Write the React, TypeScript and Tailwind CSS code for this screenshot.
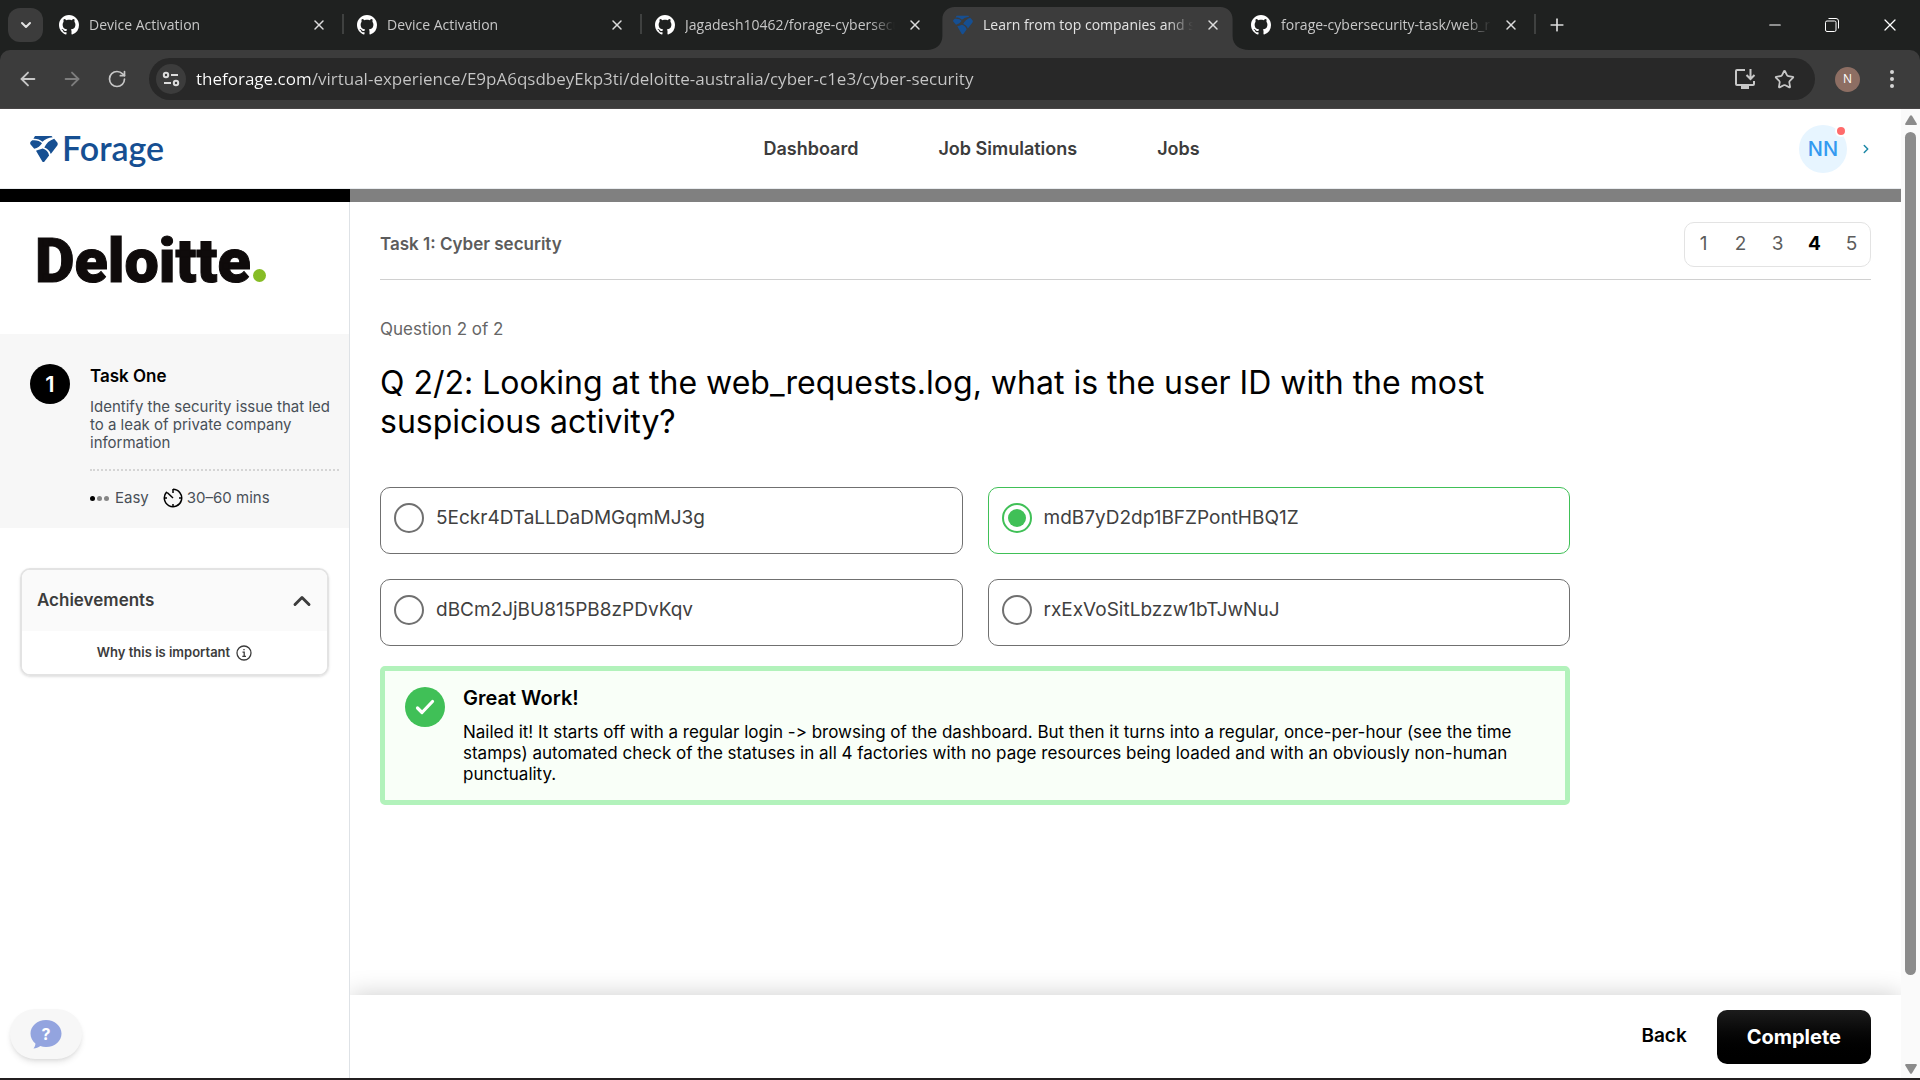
import type { ReactNode } from "react";
import {
  ArrowLeft,
  ArrowRight,
  ChevronDown,
  ChevronRight,
  ChevronUp,
  Minus,
  Plus,
  RotateCw,
  Star,
  X,
} from "lucide-react";

function GithubMark() {
  return (
    <svg viewBox="0 0 16 16" className="size-5 shrink-0 fill-white" aria-hidden="true">
      <path d="M8 0C3.58 0 0 3.58 0 8c0 3.54 2.29 6.53 5.47 7.59.4.07.55-.17.55-.38 0-.19-.01-.82-.01-1.49-2.01.37-2.53-.49-2.69-.94-.09-.23-.48-.94-.82-1.13-.28-.15-.68-.52-.01-.53.63-.01 1.08.58 1.23.82.72 1.21 1.87.87 2.33.66.07-.52.28-.87.51-1.07-1.78-.2-3.64-.89-3.64-3.95 0-.87.31-1.59.82-2.15-.08-.2-.36-1.02.08-2.12 0 0 .67-.21 2.2.82.64-.18 1.32-.27 2-.27.68 0 1.36.09 2 .27 1.53-1.04 2.2-.82 2.2-.82.44 1.1.16 1.92.08 2.12.51.56.82 1.27.82 2.15 0 3.07-1.87 3.75-3.65 3.95.29.25.54.73.54 1.48 0 1.07-.01 1.93-.01 2.2 0 .21.15.46.55.38A8.01 8.01 0 0 0 16 8c0-4.42-3.58-8-8-8z" />
    </svg>
  );
}

function ForageMark({ className }: { className: string }) {
  return (
    <svg viewBox="0 0 28 28" className={className} aria-hidden="true">
      <path d="M5 1h16.500l1.200 1.300c-4.500.6-7.500 2-10.200 4.400C10 4.300 7 3.500 3.400 3.700z" />
      <path d="M2.300 5.300c4-.5 7.600.5 9.700 2.900-1.500 2.600-4.200 4.600-7.800 5.500L.6 9.400C-.1 8.400.1 7.400.8 6.600z" />
      <path d="M24.200 3.700l3.100 3.800c.6.9.6 2 0 2.900l-6.500 8.500c-1-2.800-3.400-5.100-6.500-6.300 1.800-4.300 5.300-7.500 9.900-8.900z" />
      <path d="M6 15.800c2.700-.8 4.900-1.700 6.700-2.200 3.400 1 5.800 3.500 6.400 6.800l-4.600 6.100c-.6.8-1.600.8-2.200 0z" />
    </svg>
  );
}

type Tab = { title: string; icon: "github" | "forage"; active?: boolean; divider?: boolean };

const tabs: Tab[] = [
  { title: "Device Activation", icon: "github", divider: true },
  { title: "Device Activation", icon: "github", divider: true },
  { title: "Jagadesh10462/forage-cybersecurity-task", icon: "github" },
  { title: "Learn from top companies and start your career", icon: "forage", active: true },
  { title: "forage-cybersecurity-task/web_requests.log", icon: "github", divider: true },
];

function BrowserTab({ title, icon, active, divider }: Tab) {
  return (
    <li className="relative flex w-[298px] items-end">
      {active && (
        <svg
          viewBox="0 0 314 43"
          preserveAspectRatio="none"
          className="absolute bottom-0 -left-3 h-[43px] w-[322px] fill-[#3c3c3c]"
          aria-hidden="true"
        >
          <path d="M0 43c8 0 15-5 15-14V12C15 5 20 0 27 0h259c7 0 12 5 12 12v17c0 9 7 14 16 14z" />
        </svg>
      )}
      <div className="relative flex h-[50px] w-full items-center px-3.5 py-2">
        {icon === "github" ? <GithubMark /> : <ForageMark className="h-6 w-5 shrink-0 fill-[#164f92]" />}
        <span
          className={
            (active ? "text-[#e3e3e3]" : "text-[#c7c7c7]") +
            " ml-2.5 min-w-0 flex-1 overflow-hidden text-sm whitespace-nowrap [mask-image:linear-gradient(to_right,black_88%,transparent)]"
          }
        >
          {title}
        </span>
        <button type="button" aria-label="Close tab" className="ml-2.5 grid size-5 place-items-center text-[#dcdcdc]">
          <X className="size-4" strokeWidth={2.2} />
        </button>
      </div>
      {divider && <span className="absolute top-[14px] -right-px h-5 w-0.5 bg-[#3f4140]" />}
    </li>
  );
}

function BrowserChrome() {
  return (
    <header className="shrink-0 bg-[#1f2120] font-['Open_Sans',sans-serif]">
      <div className="flex h-[50px] items-center">
        <button
          type="button"
          aria-label="Search tabs"
          className="ml-2 grid h-[34px] w-[35px] shrink-0 place-items-center rounded-xl bg-[#3c3c3c] text-[#e3e3e3]"
        >
          <ChevronDown className="size-4" strokeWidth={3} />
        </button>
        <ul className="ml-0.5 flex">
          {tabs.map((tab, i) => (
            <BrowserTab key={i} {...tab} />
          ))}
        </ul>
        <button type="button" aria-label="New tab" className="ml-2.5 grid size-6 place-items-center text-[#dcdcdc]">
          <Plus className="size-5" strokeWidth={2} />
        </button>
        <div className="mr-5 ml-auto flex items-center gap-10 text-white">
          <button type="button" aria-label="Minimize">
            <Minus className="size-[18px]" strokeWidth={1.5} />
          </button>
          <button type="button" aria-label="Restore">
            <svg viewBox="0 0 16 16" className="size-4 fill-none stroke-white" aria-hidden="true">
              <rect x="1.500" y="4" width="10.500" height="10.500" rx="1.500" />
              <path d="M4.500 1.500H12A2.500 2.500 0 0 1 14.500 4v7.500" />
            </svg>
          </button>
          <button type="button" aria-label="Close">
            <X className="size-5" strokeWidth={1.5} />
          </button>
        </div>
      </div>

      <div className="flex h-[59px] items-center rounded-t-[10px] border-b border-[#484546] bg-[#3c3c3c] text-[#c7c7c7]">
        <button type="button" aria-label="Back" className="ml-[17px]">
          <ArrowLeft className="size-[22px]" />
        </button>
        <button type="button" aria-label="Forward" className="ml-[22px] text-[#7d7d7d]">
          <ArrowRight className="size-[22px]" />
        </button>
        <button type="button" aria-label="Reload" className="ml-6">
          <RotateCw className="size-5" />
        </button>
        <div className="ml-[22px] flex h-[42px] min-w-0 flex-1 items-center rounded-full bg-[#282828] pl-[7px]">
          <button
            type="button"
            aria-label="View site information"
            className="grid size-[30px] shrink-0 place-items-center rounded-full bg-[#3c3c3c]"
          >
            <svg viewBox="0 0 18 18" className="size-[18px] fill-none stroke-[#dcdcdc] stroke-2" aria-hidden="true">
              <circle cx="4" cy="5" r="2.200" />
              <path d="M9 5h7M2 13h7" />
              <circle cx="14" cy="13" r="2.200" />
            </svg>
          </button>
          <input
            type="text"
            aria-label="Address"
            defaultValue="theforage.com/virtual-experience/E9pA6qsdbeyEkp3ti/deloitte-australia/cyber-c1e3/cyber-security"
            className="ml-2.5 min-w-0 flex-1 bg-[linear-gradient(to_right,#ffffff_115px,#c7c7c7_115px)] bg-clip-text text-[17px] text-transparent outline-none"
          />
          <button type="button" aria-label="Install app">
            <svg viewBox="0 0 22 22" className="size-[22px] fill-none stroke-[#c7c7c7] stroke-2" aria-hidden="true">
              <path d="M11 2H3a1 1 0 0 0-1 1v13a1 1 0 0 0 1 1h16a1 1 0 0 0 1-1v-3" />
              <path d="M16.500 1v9.500M12.500 7l4 4 4-4" />
              <path d="M7 19.500h8" strokeWidth="3" />
            </svg>
          </button>
          <button type="button" aria-label="Bookmark this page" className="mr-5 ml-[18px]">
            <Star className="size-[21px]" strokeWidth={2} />
          </button>
        </div>
        <button
          type="button"
          aria-label="Profile"
          className="ml-5 grid size-[25px] place-items-center rounded-full bg-[#8d6e63] text-xs text-white"
        >
          N
        </button>
        <button type="button" aria-label="Menu" className="mr-[26px] ml-[30px] flex flex-col gap-[3px]">
          <span className="size-1 rounded-full bg-[#d5d5d5]" />
          <span className="size-1 rounded-full bg-[#d5d5d5]" />
          <span className="size-1 rounded-full bg-[#d5d5d5]" />
        </button>
      </div>
    </header>
  );
}

function SiteHeader() {
  return (
    <header className="flex h-20 shrink-0 items-center justify-between border-b border-[#e9ecef] bg-white pr-7 pl-[30px]">
      <a href="#home" className="flex items-start text-[#164f92]" aria-label="Forage home">
        <ForageMark className="size-7 fill-[#164f92]" />
        <span className="ml-1 font-['Lato',sans-serif] text-[34px] leading-[26px] font-semibold">Forage</span>
      </a>
      <nav className="flex gap-20 text-lg font-semibold text-[#3c3c3c]">
        <a href="#dashboard">Dashboard</a>
        <a href="#simulations">Job Simulations</a>
        <a href="#jobs">Jobs</a>
      </nav>
      <button type="button" aria-label="Account menu" className="flex items-center gap-3">
        <span className="relative grid size-12 place-items-center rounded-full bg-[#e7f5ff] text-xl font-medium text-[#339af0]">
          NN
          <span className="absolute top-0 right-0 size-3 rounded-full border-2 border-white bg-[#ff6b6b]" />
        </span>
        <ChevronRight className="size-3.5 text-[#1b87a6]" strokeWidth={2.5} />
      </button>
    </header>
  );
}

function Sidebar() {
  return (
    <aside className="flex w-[350px] shrink-0 flex-col border-r border-[#dee2e6] bg-white">
      <div className="flex h-[132px] items-start pt-7 pl-[35px]">
        <span className="font-['Roboto',sans-serif] text-[61px] leading-[62px] font-black text-[#0f0b0b] [-webkit-text-stroke:1px_#0f0b0b]">
          Deloitte
        </span>
        <span className="mt-[39px] ml-0.5 size-[13px] rounded-full bg-[#86bc25]" />
      </div>
      <section className="flex gap-5 bg-[#f7f7f7] pt-[30px] pr-2.5 pb-[18px] pl-[30px]">
        <span className="grid size-10 shrink-0 place-items-center rounded-full bg-black text-[22px] font-semibold text-white">
          1
        </span>
        <div className="min-w-0 flex-1">
          <h2 className="text-[17px] leading-6 font-semibold text-black">Task One</h2>
          <p className="mt-2.5 border-b-2 border-dotted border-[#d5d5d5] pb-[17px] text-[15px] leading-[18px] text-[#495057]">
            Identify the security issue that led to a leak of private company information
          </p>
          <div className="mt-[15px] flex items-center text-[15px] leading-6 text-[#495057]">
            <span className="flex gap-0.5">
              <span className="size-[5px] rounded-full bg-black" />
              <span className="size-[5px] rounded-full bg-[#868686]" />
              <span className="size-[5px] rounded-full bg-[#868686]" />
            </span>
            <span className="ml-1.5">Easy</span>
            <svg viewBox="0 0 20 20" className="mr-1 ml-3.5 size-5 fill-none stroke-black stroke-[1.5]" aria-hidden="true">
              <path d="M10 1.300a8.700 8.700 0 1 1-6.200 2.600" />
              <path d="M10 1v4M16 10h2.500M10 16v2.500M1.500 10H4M10 10L4.200 4.500" />
            </svg>
            <span>30–60 mins</span>
          </div>
        </div>
      </section>
      <section className="mx-5 mt-10 overflow-hidden rounded-[10px] border-2 border-[#e3e3e3] shadow-sm">
        <button
          type="button"
          aria-expanded="true"
          className="flex h-[61px] w-full items-center justify-between bg-[#fafafa] pr-[11px] pl-[15px] text-[17px] font-semibold text-[#3c3c3c]"
        >
          Achievements
          <ChevronUp className="size-7" strokeWidth={2.5} />
        </button>
        <a
          href="#why"
          className="flex h-[43px] items-center justify-center gap-1.5 bg-white text-[13px] font-semibold text-[#3c3c3c]"
        >
          Why this is important
          <svg viewBox="0 0 16 16" className="size-4 fill-none stroke-[#3c3c3c] stroke-[1.3]" aria-hidden="true">
            <circle cx="8" cy="8" r="7" />
            <path d="M6.500 7.200h1.700v4M6.300 11.300h3.700M8 4v1.300" />
          </svg>
        </a>
      </section>
      <button
        type="button"
        aria-label="Help"
        className="mt-auto mb-[19px] ml-2.5 grid h-[50px] w-[72px] place-items-center rounded-full bg-[#f7f7f7] shadow-md"
      >
        <span className="relative grid size-8 place-items-center">
          <svg viewBox="0 0 32 32" className="absolute inset-0 size-8 fill-[#93a4df]" aria-hidden="true">
            <path d="M16 2c8.600 0 15.500 6 15.500 13.500S25 29 16 29c-2 0-4-.3-5.700-1-2 1.500-4.300 2.500-6.800 2.500 1.300-1.700 2-3.300 1.900-5C2.300 23 .5 19.500.5 15.500.5 8 7.400 2 16 2z" />
          </svg>
          <span className="relative text-base leading-none font-bold text-white">?</span>
        </span>
      </button>
    </aside>
  );
}

const options = [
  "5Eckr4DTaLLDaDMGqmMJ3g",
  "mdB7yD2dp1BFZPontHBQ1Z",
  "dBCm2JjBU815PB8zPDvKqv",
  "rxExVoSitLbzzw1bTJwNuJ",
];

function Option({ value, checked }: { value: string; checked: boolean }) {
  return (
    <label className="flex items-center gap-3 rounded-[10px] border border-[#707070] px-[13px] pt-[15px] pb-5 text-[19px] text-[#404040] has-[:checked]:border-[#40c057]">
      <input
        type="radio"
        name="answer"
        value={value}
        defaultChecked={checked}
        className="size-[30px] shrink-0 appearance-none rounded-full border-2 border-[#707070] p-1 checked:border-[#40c057] checked:bg-[#40c057] checked:bg-clip-content"
      />
      {value}
    </label>
  );
}

function Pager() {
  const cell = "w-[37px] text-center";
  const pages: ReactNode[] = [1, 2, 3, 4, 5].map((n) => (
    <a
      key={n}
      href={"#step-" + n}
      aria-current={n === 4 ? "step" : undefined}
      className={n === 4 ? cell + " font-bold text-black" : cell + " text-[#5c5c5c]"}
    >
      {n}
    </a>
  ));
  return (
    <nav aria-label="Steps" className="flex h-[45px] items-center rounded-[10px] border border-[#e3e3e3] text-[19px]">
      {pages}
    </nav>
  );
}

function Content() {
  return (
    <main className="flex min-w-0 flex-1 flex-col bg-white">
      <div className="flex-1 px-[30px]">
        <div className="flex items-center justify-between border-b border-[#d0d0d0] pt-5 pb-3">
          <h2 className="text-[17px] font-semibold text-[#5c5c5c]">Task 1: Cyber security</h2>
          <Pager />
        </div>
        <form className="max-w-[1190px] [font-variant-ligatures:none]">
          <p className="mt-[37px] text-[17px] leading-6 text-[#666666]">Question 2 of 2</p>
          <h1 className="mt-[22px] text-[32px] leading-[39px] text-black">
            Q 2/2: Looking at the web_requests.log, what is the user ID with the most suspicious activity?
          </h1>
          <div className="mt-[46px] grid grid-cols-2 gap-[25px]">
            {options.map((value, i) => (
              <Option key={value} value={value} checked={i === 1} />
            ))}
          </div>
          <section className="mt-5 flex gap-[18px] rounded-[5px] border-[5px] border-[#b2f2bb] bg-[#f9fff8] pt-4 pr-10 pb-[15px] pl-5">
            <span className="grid size-10 shrink-0 place-items-center rounded-full bg-[#40c057]">
              <svg viewBox="0 0 20 20" className="size-5 fill-none stroke-white stroke-[3.2]" aria-hidden="true">
                <path d="M2.500 11l4.500 4.500L17.500 4.500" strokeLinecap="round" strokeLinejoin="round" />
              </svg>
            </span>
            <div>
              <h2 className="text-xl leading-[22px] font-semibold text-black">Great Work!</h2>
              <p className="mt-[13px] text-[17px] leading-[21px] text-black">
                Nailed it! It starts off with a regular login -&gt; browsing of the dashboard. But then it turns into a
                regular, once-per-hour (see the time stamps) automated check of the statuses in all 4 factories with no
                page resources being loaded and with an obviously non-human punctuality.
              </p>
            </div>
          </section>
        </form>
      </div>
      <footer className="flex h-[83px] shrink-0 items-center justify-end gap-[30px] bg-white px-[30px] shadow-[0_0_24px_rgba(0,0,0,0.2)] [clip-path:inset(-40px_0_0_0)]">
        <button type="button" className="text-[19px] font-semibold text-black">
          Back
        </button>
        <button
          type="button"
          className="h-[54px] rounded-[10px] bg-linear-to-b from-[#1c1c1c] to-black px-[30px] text-xl font-bold text-white"
        >
          Complete
        </button>
      </footer>
    </main>
  );
}

function Scrollbar() {
  return (
    <div className="flex w-[19px] shrink-0 flex-col items-center bg-[#fafafa] pt-1.5 pb-1" aria-hidden="true">
      <svg viewBox="0 0 12 10" className="h-2.5 w-3 fill-[#8b8b8b]">
        <path d="M5 .8q1-1.300 2 0l4.700 7.700q.5 1.500-1 1.500H1.300q-1.500 0-1-1.500z" />
      </svg>
      <span className="mt-[7px] mb-[89px] w-[11px] flex-1 rounded-full bg-[#8b8b8b]" />
      <svg viewBox="0 0 12 10" className="h-2.5 w-3 rotate-180 fill-[#8b8b8b]">
        <path d="M5 .8q1-1.300 2 0l4.700 7.700q.5 1.500-1 1.500H1.300q-1.500 0-1-1.500z" />
      </svg>
    </div>
  );
}

export default function App() {
  return (
    <div className="flex h-screen flex-col overflow-hidden border-b-2 border-[#231f20] bg-white font-['Inter',sans-serif]">
      <BrowserChrome />
      <div className="flex min-h-0 flex-1">
        <div className="flex min-w-0 flex-1 flex-col">
          <SiteHeader />
          <div className="flex h-[13px] shrink-0 bg-[#808080]">
            <div className="w-[350px] bg-black" />
          </div>
          <div className="flex min-h-0 flex-1">
            <Sidebar />
            <Content />
          </div>
        </div>
        <Scrollbar />
      </div>
    </div>
  );
}
